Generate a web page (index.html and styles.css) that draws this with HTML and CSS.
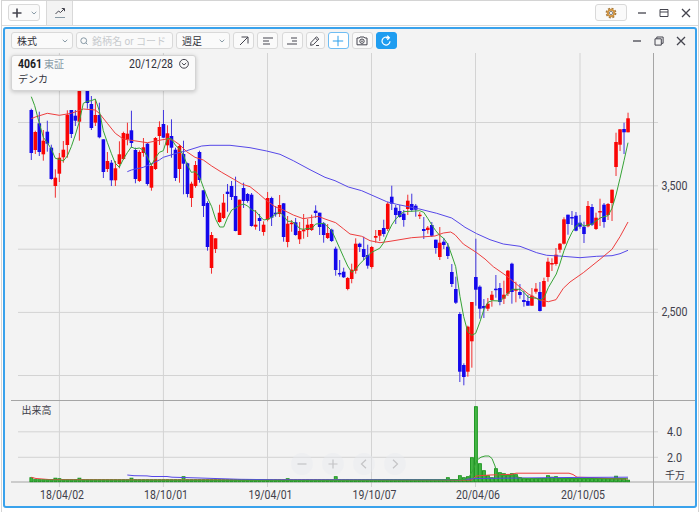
FILE: index.html
```html
<!DOCTYPE html>
<html lang="ja">
<head>
  <meta charset="UTF-8">
  <title>4061 デンカ</title>
  <link rel="stylesheet" href="styles.css">
</head>
<body>
  <div class="app">
    <header class="titlebar">
      <button class="btn add">
        <svg width="10" height="10" viewBox="0 0 10 10"><path class="bold" d="M5 .5v9M.5 5h9"/></svg>
        <svg width="6" height="4" viewBox="0 0 6 4"><path class="soft" d="M.7.8 3 3 5.3.8"/></svg>
      </button>
      <div class="tab">
        <svg width="12" height="12" viewBox="0 0 12 12"><path d="M1.5 7 4.5 4 6.5 5.5 10 2M7.8 1.5h2.7v2.7"/><path class="soft" d="M1 10.5h10"/></svg>
      </div>
      <button class="btn gear">
        <svg width="12" height="12" viewBox="0 0 12 12"><circle class="teeth" cx="6" cy="6" r="4.5"/><circle class="ring" cx="6" cy="6" r="3.2"/><circle class="hub" cx="6" cy="6" r="1.6"/></svg>
      </button>
      <div class="controls">
        <svg width="10" height="10" viewBox="0 0 10 10"><path class="mid" d="M1 5h8"/></svg>
        <svg width="10" height="10" viewBox="0 0 10 10"><path d="M1 1.5h8v7H1zM1 4h8"/></svg>
        <svg width="10" height="10" viewBox="0 0 10 10"><path class="mid" d="M1 1l8 8M9 1 1 9"/></svg>
      </div>
    </header>

    <main class="window">
      <div class="toolbar">
        <button class="btn select kind"><span>株式</span><svg width="6" height="4" viewBox="0 0 6 4"><path class="soft" d="M.7.8 3 3 5.3.8"/></svg></button>
        <div class="btn search">
          <svg width="8" height="8" viewBox="0 0 8 8"><circle class="soft" cx="3.7" cy="3.7" r="2.9"/><path class="soft" d="M5.8 5.8 7.5 7.5"/></svg>
          <span>銘柄名 or コード</span>
        </div>
        <button class="btn select span"><span>週足</span><svg width="6" height="4" viewBox="0 0 6 4"><path class="soft" d="M.7.8 3 3 5.3.8"/></svg></button>
        <button class="btn tool"><svg width="12" height="12" viewBox="0 0 12 12"><path d="M2 10 10 2M3.5 2H10v6.5"/></svg></button>
        <button class="btn tool shift"><svg width="12" height="12" viewBox="0 0 12 12"><path d="M1 3h10M1 6h6M1 9h7"/></svg></button>
        <button class="btn tool"><svg width="12" height="12" viewBox="0 0 12 12"><path d="M5 3h6M6 6h5M1 9h10"/></svg></button>
        <button class="btn tool pen"><svg width="12" height="12" viewBox="0 0 12 12"><path d="M2 7.5 7.5 1.8 9.8 4 4.3 9.7 1.6 10.3zM6.3 3 8.6 5.2M7 10.5h3"/></svg></button>
        <button class="btn tool active"><svg width="12" height="12" viewBox="0 0 12 12"><path d="M6 .8v10.4M.8 6h10.4"/></svg></button>
        <button class="btn tool"><svg width="12" height="12" viewBox="0 0 12 12"><path d="M1 3h2.2l.8-1h4l.8 1H11v6.8H1z"/><circle cx="6" cy="6.2" r="2.2"/><circle cx="6" cy="6.2" r=".4"/></svg></button>
        <button class="btn tool reload"><svg width="12" height="12" viewBox="0 0 12 12"><path d="M8.2 2.7A4 4 0 1 0 10 6.3M6 2.8h3.3M7.3.7 9.4 2.8 7.3 4.9"/></svg></button>
        <div class="controls">
          <svg width="10" height="10" viewBox="0 0 10 10"><path class="mid" d="M1 5h8"/></svg>
          <svg width="10" height="10" viewBox="0 0 10 10"><path d="M1 2.8h6.3v6.3H1zM2.8 2.6V1h6.3v6.3H7.5"/></svg>
          <svg width="10" height="10" viewBox="0 0 10 10"><path class="mid" d="M1 1l8 8M9 1 1 9"/></svg>
        </div>
      </div>

      <div class="chart-area">
        <svg class="chart" id="chart" width="690" height="453" viewBox="5 53 690 453">
          <path class="grid" d="M18 122.5h640M18 185.8h640M18 249.2h640M18 312.4h640M18 375.5h640M18 431.8h640M18 457.3h640"/>
          <path class="grid" d="M59.4 53v434M163.4 53v434M267.5 53v434M371.5 53v434M475.5 53v434M580 53v434"/>
          <path class="axis" d="M11 400.5h684M11 482h684M653.5 53v453"/>
          <g id="volumes"></g>
          <g id="candles"></g>

          <polyline class="ma blue" points="127.3,171.7 131.3,170 143.3,167.3 151.3,164 159.3,160 163.3,157.3 175,153.7 186.7,150.7 201.7,146 210,145.3 230,145.3 250,147.7 266.7,151 280,154.3 293.3,160.7 310,169.7 325,177.3 335,180.7 348.3,187 361.7,190.7 386.7,201.7 396.7,204.3 418.3,208.7 436.7,213.3 451.7,218 460,223.7 465,227.3 476.7,233.7 490,239.7 503.3,244 520,246.3 536.7,252.7 546.7,255.3 559.3,256 580,257.7 596.7,256.3 612,255.7 620,253.7 628,250.3"/>
          <polyline class="ma red" points="31.3,118.7 35.3,117 47.3,113.3 59.3,115.3 71.3,113.3 83.3,109 95.3,110 99.3,113.3 107.3,123.3 115.3,133.3 123.3,139 131.3,140.3 147.3,142.7 159.3,140.3 166.7,139 173.3,140.3 180,145 186.7,151.7 195,157.3 203.3,160 211.7,166 221.7,172.3 233.3,179 241.7,184 250,186.7 258.3,193.3 266.7,200.7 275,206.7 283.3,210 293.3,215 303.3,218.7 310,217.7 318.3,216.3 325,219 335.7,222.7 343.3,228.7 350,234 361.7,236.3 370,240.7 380,242.7 390,241.3 411.7,237.7 435,236 443.3,233 450.7,232 455,234.7 463.3,244 476.7,252.7 485,259 493.3,266.7 506.7,276 516.7,284.3 528.3,294 540,300 548.3,301.7 556,299.7 563.3,288.3 570,282 583.3,272.7 600,259.3 612,249.3 620,236.7 628,222"/>
          <polyline class="ma green" points="31.3,96.7 34.7,105.7 39.3,123.3 43.3,137.3 47.3,142.7 51.3,149 55.3,158.3 59.3,159.3 63.3,161 67.3,156 71.3,146.7 75.3,135 79.3,121.7 83.3,103.3 87.3,101.3 91.3,100.7 95.3,99 99.3,110.7 103.3,130.7 107.3,142.3 111.3,153.3 115.3,163.3 119.3,167.3 123.3,159.3 127.3,152.7 131.3,147 135.3,148.7 139.3,148 143.3,150 147.3,156.7 151.3,165.3 155.3,158 159.4,152.3 163.3,150.7 167.3,138.3 171.3,138.7 175.3,145 179.3,149 183.3,155 187.3,165 191.3,172.3 195.6,171.7 200,178 203.7,188.3 207.7,198.3 211.7,206.7 215.7,219.3 219.7,227 223.7,227 227.7,217.3 231.7,210 235.7,208 239.7,205.3 243.7,204 247.7,206 251.7,210 255.7,211.3 259.7,216 263.7,220 267.7,219.3 271.7,217.3 275.7,214 279.7,212 283.7,216 287.7,221.3 291.7,221.3 295.7,224 299.7,228.7 303.7,229.3 307.7,228.3 311.7,228.7 315.7,224 323.7,223.3 327.7,226.7 331.7,230.7 335.7,239.3 339.7,248.3 343.7,257.3 347.7,266 351.7,272.3 355.7,269.3 359.7,264 363.7,260 367.7,255.7 371.7,252.3 379.7,248.3 383.7,242.7 387.7,233.3 391.7,225 395.7,219 399.7,215.3 403.7,211.7 415.7,211 419.7,210.7 423.7,212.3 427.7,218.3 431.7,224.7 435.7,230.7 439.7,235.3 443.7,238.3 447.7,244 451.7,255 455.7,266.7 460,296.7 463.7,316.7 467.7,331.7 471.7,335.3 475.7,333.3 480,321.7 484.3,308.3 488.3,302 492.3,300.7 500.3,301 504.3,297.3 508.3,292.7 512.3,289.3 520.3,289.3 524.3,292.7 528.3,297.3 536.3,298.3 540.3,300.3 544.3,297.3 548.3,287.7 556.3,274 559.5,265 564,250.7 568,240.7 572,232.3 576,226 580,223.3 584,226 588,225 592,224 600,218 604,216.7 608,215.7 612,208.3 616,195 620,178.3 624,160.7 628,142.7"/>

          <polyline class="ma red" points="31.3,477.3 36,478.5 50,479.6 150,480 300,480 472,480 476,476 490,475 512,474.3 516,473.2 569,473.2 573,474.5 577,477.2 590,477.5 610,478.6 628,479"/>
          <polyline class="ma blue" points="127.3,475 134,475.7 147,475.9 152,476.5 167,476.5 172,477.2 200,478 218,478.6 240,479.3 280,479.8 460,479.7 476,478.5 520,478 580,477.4 628,477.2"/>
          <polyline class="ma green" points="31.3,480 300,480.4 440,480 465,479.4 469,477 473,470 477,460 481,457.2 485,456 489,456 492,458.5 495,466 497,474 501,475.3 515,476 522,478.3 540,479 628,478.8"/>

          <g class="label">
            <text x="661.5" y="189.8" textLength="26" lengthAdjust="spacingAndGlyphs">3,500</text>
            <text x="661.5" y="316.3" textLength="26" lengthAdjust="spacingAndGlyphs">2,500</text>
            <text x="667" y="436.3" textLength="15" lengthAdjust="spacingAndGlyphs">4.0</text>
            <text x="667" y="461.5" textLength="15" lengthAdjust="spacingAndGlyphs">2.0</text>
            <text class="unit" x="665" y="478.8">千万</text>
            <text class="unit" x="21.5" y="414">出来高</text>
            <text x="40" y="499.3" textLength="44" lengthAdjust="spacingAndGlyphs">18/04/02</text>
            <text x="144" y="499.3" textLength="44" lengthAdjust="spacingAndGlyphs">18/10/01</text>
            <text x="248.5" y="499.3" textLength="44" lengthAdjust="spacingAndGlyphs">19/04/01</text>
            <text x="352.5" y="499.3" textLength="44" lengthAdjust="spacingAndGlyphs">19/10/07</text>
            <text x="456" y="499.3" textLength="44" lengthAdjust="spacingAndGlyphs">20/04/06</text>
            <text x="561" y="499.3" textLength="44" lengthAdjust="spacingAndGlyphs">20/10/05</text>
          </g>
        </svg>

        <div class="quote">
          <svg class="quote-head" width="171" height="14" viewBox="0 0 171 14">
            <text class="code" x="0" y="10.5" textLength="24" lengthAdjust="spacingAndGlyphs">4061</text>
            <text class="market" x="26" y="10.5">東証</text>
            <text class="date" x="111" y="10.5" textLength="44" lengthAdjust="spacingAndGlyphs">20/12/28</text>
            <circle cx="166" cy="6.8" r="4.4"/>
            <path d="M163.8 6 166 8 168.2 6"/>
          </svg>
          <div class="quote-name">デンカ</div>
        </div>

        <div class="nav">
          <button><svg width="10" height="10" viewBox="0 0 10 10"><path d="M.5 5h9"/></svg></button>
          <button><svg width="10" height="10" viewBox="0 0 10 10"><path d="M5 .5v9M.5 5h9"/></svg></button>
          <button><svg width="10" height="10" viewBox="0 0 10 10"><path d="M7 .8 2.5 5 7 9.2"/></svg></button>
          <button><svg width="10" height="10" viewBox="0 0 10 10"><path d="M3 .8 7.5 5 3 9.2"/></svg></button>
        </div>
      </div>
    </main>
  </div>
  <script src="chart.js"></script>
</body>
</html>
```

FILE: styles.css
```css
* {
  box-sizing: border-box;
}
body {
  margin: 0;
  background: #fff;
  color: #32323c;
  font-family: Roboto, "Noto Sans CJK JP", sans-serif;
  font-size: 10px;
  overflow: hidden;
}
svg {
  display: block;
  flex: none;
  fill: none;
  stroke: #44444e;
  stroke-width: 1;
}
svg .soft {
  stroke: #8799a5;
}
svg .mid {
  stroke-width: 1.3;
}
svg .bold {
  stroke-width: 1.6;
}
.app {
  width: 698px;
  height: 512px;
  margin-left: 1px;
  border: 1px solid #d4d4d4;
  border-bottom: 0;
}
.titlebar {
  display: flex;
  align-items: center;
  height: 25px;
  padding-left: 6px;
  border-bottom: 1px solid #d9d9d9;
}
.btn {
  display: flex;
  align-items: center;
  justify-content: center;
  height: 17px;
  padding: 0;
  border: 1px solid #d9d9d9;
  border-radius: 3px;
  background: #fafafa;
  color: #32323c;
  font: inherit;
}
.titlebar .btn {
  margin-bottom: 1px;
}
.add {
  width: 32px;
  gap: 9px;
}
.tab {
  display: flex;
  align-items: center;
  justify-content: center;
  width: 27px;
  height: 24px;
  margin-left: 6px;
  border: 1px solid #d9d9d9;
  border-width: 0 1px;
  background: #f3f3f3;
}
.gear {
  width: 32px;
  margin-left: auto;
}
.gear .teeth {
  stroke: #a67a3e;
  stroke-width: 1.8;
  stroke-dasharray: 2 1.53;
}
.gear .ring {
  stroke: #cf9443;
  stroke-width: 2;
}
.gear .hub {
  fill: #fff;
  stroke: #666;
  stroke-width: .8;
}
.controls {
  display: flex;
  gap: 12px;
}
.titlebar .controls {
  margin: 0 7.5px 0 9.5px;
}
.window {
  width: 694px;
  height: 481px;
  margin: 1px 0 0 1px;
  border: 2px solid #39a2ec;
  border-radius: 3px;
  background: #f3f3f3;
}
.toolbar {
  display: flex;
  align-items: center;
  height: 24px;
  padding: 0 0 1px 6px;
}
.select {
  justify-content: space-between;
  padding: 0 4px 0 5px;
}
.kind {
  width: 62px;
}
.search {
  justify-content: flex-start;
  width: 97px;
  margin: 0 3px;
  padding-left: 3px;
  gap: 4px;
  color: #c8cbce;
  white-space: nowrap;
}
.span {
  width: 54px;
  margin-right: 3px;
}
.tool {
  width: 21px;
  margin-right: 3px;
}
.tool.shift {
  margin-right: 3.5px;
}
.tool.pen {
  width: 19px;
}
.tool.active {
  border-color: #6fbdf3;
  background: #fff;
}
.tool.active svg {
  stroke: #2b9fec;
}
.tool.reload {
  border-color: #1f9df0;
  background: #1f9df0;
}
.tool.reload svg {
  stroke: #fff;
  stroke-width: 1.2;
}
.toolbar .controls {
  margin: 0 9.5px 0 auto;
}
.chart-area {
  position: relative;
  height: 453px;
}
.grid {
  stroke: #d3d3d3;
}
.axis {
  stroke: #a5a5a5;
}
.ma {
  stroke-width: 1;
}
.ma.red {
  stroke: #ee3e3e;
}
.ma.blue {
  stroke: #5648e8;
}
.ma.green {
  stroke: #36a336;
}
.body.up {
  fill: #fa0505;
  stroke: none;
}
.body.down {
  fill: #1408ec;
  stroke: none;
}
.wick.up {
  stroke: #f03030;
}
.wick.down {
  stroke: #4035df;
}
.volume {
  fill: #45b545;
  stroke: #16921a;
  stroke-width: .9;
}
.label text {
  fill: #40404a;
  stroke: none;
  font-size: 12.5px;
}
.label .unit {
  font-size: 10px;
}
.quote {
  position: absolute;
  left: 6px;
  top: 2px;
  width: 185px;
  height: 36px;
  padding: 1px 6px 0;
  border: 1px solid #d4d4d4;
  border-radius: 3px;
  background: #fafafa;
  box-shadow: 0 1px 4px rgba(0, 0, 0, .2);
}
.quote-head {
  overflow: visible;
}
.quote text {
  stroke: none;
  fill: #30303a;
  font-size: 12px;
}
.quote .code {
  font-weight: 700;
  fill: #1c1c24;
}
.quote .market {
  font-size: 10px;
  fill: #8799a5;
}
.quote-name {
  margin-top: 2px;
  line-height: 14px;
}
.nav {
  position: absolute;
  left: 285.5px;
  top: 400px;
  display: flex;
  gap: 9.2px;
}
.nav button {
  display: flex;
  align-items: center;
  justify-content: center;
  width: 22px;
  height: 22px;
  padding: 0;
  border: 0;
  border-radius: 50%;
  background: rgba(233, 236, 239, .45);
}
.nav svg {
  stroke: #c4c4c6;
  stroke-width: 1.2;
}
```

FILE: chart.js
```js
// one row per week: high, body top, body bottom, low, 1 = up / 0 = down
const candles = [
  [108.7,110,153,160,0],[130.7,132,150,154,1],[111.7,123.3,152,156,0],[130,140.7,154.3,160.7,1],[120.7,131.7,143.7,151.7,0],
  [144.7,147.7,179,179.7,0],[169.3,177.7,186,197.7,1],[153,157.7,173.7,182,1],[141,149.7,157.3,162.7,1],[110.3,114.7,145,157.7,1],
  [110,110,134,138,0],[110,115.7,120.7,126,0],[80,85,121.7,140.7,1],[76,80,88,90,1],[80,85,103,108.7,0],
  [96,104,128,130,0],[99,115,122.7,126,1],[102.7,115,137.3,138.3,0],[139.3,139.3,172,178,0],[152,161,169,172,1],
  [160,162.7,180.3,186,0],[161,168.3,180.3,186,1],[141.3,154.3,164,168.3,1],[131.7,133,159,160,1],[122.7,133.7,139.3,145.3,1],
  [110.7,130.3,143,147.7,0],[147.7,150,179,183.3,0],[150.3,152,181,182,1],[138,147.3,153,156.7,1],[143,143.7,184,185.7,0],
  [163.3,166,187.7,190.7,1],[137,138,169,170,1],[121.3,127,136,145,1],[110,124,137.7,137.7,0],[125.3,133.3,145.3,153,1],
  [119.3,136,147.7,157.7,0],[147.7,149.7,178,181,0],[145,146,169,182.7,1],[140.7,154,163.7,194.3,0],[162.7,163.3,194,197.3,0],
  [181.7,183.7,198,207,1],[161,165,186,187.7,1],[150.7,152,180,182.7,0],[190.3,190.3,206,217,0],[201.3,203,247,250.7,0],
  [232,235,268,273.7,1],[238.3,238.3,249,253,1],[204.7,212.7,222,222.7,1],[194,202.7,218,219,1],[184,191.7,194,211.7,0],
  [181,186,197,200,0],[176.7,196,231,231.3,0],[199.7,199.7,235,235,1],[182.7,188,201,208,0],[193,194,201,202.7,0],
  [193,194.7,226,226.7,0],[210,224.7,226.7,229.7,1],[214,218,221,231,0],[221.3,224.7,232,235.7,1],[192,198,219.7,221.3,1],
  [196.7,198,217.7,226,0],[206,212.7,214.3,216.7,0],[195,205,214,217,1],[203,203.3,237,241.7,0],[216,223.7,242,247.3,1],
  [220,222.7,224,231.7,1],[218,222.3,235,235.7,0],[222,231,239.3,244,1],[214,229.7,231.3,238.7,1],[219,224.7,230,237,1],
  [214.7,224,230,231,1],[205.3,210.7,213,218,0],[212.7,212.7,227,235,0],[222,223.3,235,242.7,0],[224,233,238,239,1],
  [228.7,229.7,241,242,0],[246.7,248.7,270,275.7,0],[260,273,274.3,276.7,0],[267.7,271.7,277.3,278,0],[277,278,289,290.3,1],
  [263.7,269.7,279,283.3,1],[238.3,243.7,270.7,273.7,1],[242.7,243.7,247,252,0],[236.7,249,257,260,0],[244.7,255,265.7,268.7,0],
  [246,247,267,268.7,1],[230,236,237.7,242.7,1],[230,230,235.7,241,1],[219.7,228,234,236.7,0],[202,203.7,229,231,1],
  [185.7,196.7,203.7,210,0],[205,207.7,215,224,0],[205,211,217,217.7,0],[210,213.7,220,226.7,0],[194.7,200.7,209,215,1],
  [193.7,204,210,211.7,0],[204,205.7,209.7,216.7,0],[212,214.7,216,219,1],[217,229,231,239,0],[226,227.7,230,233.7,1],
  [222,225,235.7,237,0],[239.7,239.7,248,253.7,0],[227,242.7,257,260,1],[238,241.7,245,249,0],[243,246.7,256,259,0],
  [264,272,284,287,0],[276.7,289,302.7,304,0],[312,314,371.7,382,0],[363.3,365,377,385.3,0],[325.7,326.7,371.7,376.7,1],
  [302,302,341.3,367.7,1],[238.7,277,289.7,305.7,0],[285.3,286.7,308.7,318.7,0],[299,306,308.3,318,0],[298,303.7,308.7,311,1],
  [291,294.7,300,306.7,1],[275,288.7,290,297.7,0],[283,288,302,305.3,0],[280.7,294.7,298.7,304,1],[270,270.7,293.7,296,1],
  [262.7,263.7,292,303.7,0],[281.7,289,290.7,302.3,1],[284,292,295,298.7,0],[291,300,302,306.7,0],[295,301,305.7,305.7,0],
  [288,295.7,305.7,305.7,1],[283,288.7,291.7,293.7,1],[282,292,311,311.5,0],[277.7,281,306.7,307,1],[257.7,261.7,277,281.7,1],
  [258.3,263,264.3,271,1],[248,254.7,264,265.7,1],[243,243.7,249.7,252.7,1],[217.3,219.3,243.7,244.5,1],[214.7,214.7,224,234.7,0],
  [211,217,218,225,0],[212,215.7,230.7,231.3,0],[215,222.7,226.7,228.7,0],[221.7,226.7,234,243,0],[201,206,226.3,227.3,1],
  [204,207,224.7,226,0],[212.7,217.7,229,230,1],[198.7,211,212.3,226,1],[203,204.7,222,227.7,0],[203,204,215,220,1],
  [189.7,189.7,203,221,1],[132.7,142,167,176,1],[129.3,129.3,144.7,151,1],[122.7,129,132.3,154,0],[112.7,118.3,132.3,132.3,1]
];

// weeks whose volume stands out from the usual level
const peaks = {
  0: 4, 6: 3.5, 7: 3, 12: 3.5, 25: 3.5, 38: 5, 64: 3, 76: 5, 104: 4, 107: 6, 108: 4, 109: 5,
  110: 24, 111: 75, 112: 18, 113: 11, 114: 6, 115: 4, 116: 13, 117: 9, 118: 8, 119: 7, 120: 8,
  121: 7, 122: 4, 123: 3, 124: 2.5, 129: 6, 130: 4.5, 131: 5, 146: 5.5, 149: 1.5
};

const step = 4.005;
const left = 31.3;
const base = 481.7;
let bodies = '';
let bars = '';

candles.forEach(([high, top, bottom, low, up], i) => {
  const x = left + i * step;
  const cls = up ? 'up' : 'down';
  bodies += `<path class="wick ${cls}" d="M${x} ${high}V${low}"/>`;
  bodies += `<rect class="body ${cls}" x="${x - 1.8}" y="${top}" width="3.6" height="${Math.max(bottom - top, 1.5)}"/>`;

  const h = peaks[i] || (i > 110 ? 3.2 : 2);
  bars += `<rect class="volume" x="${x - 1.4}" y="${base - h}" width="2.9" height="${h}"/>`;
});

document.getElementById('candles').innerHTML = bodies;
document.getElementById('volumes').innerHTML = bars;
```
